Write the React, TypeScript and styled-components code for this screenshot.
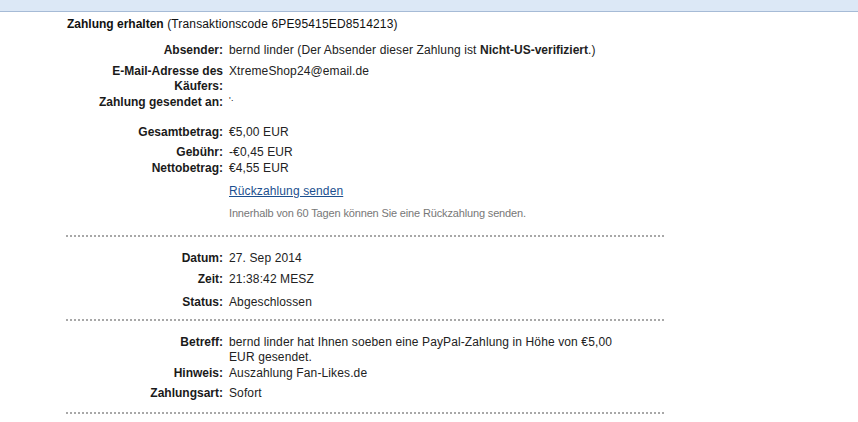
import React from "react";
import styled, { createGlobalStyle } from "styled-components";

const Global = createGlobalStyle`
  html, body { margin: 0; padding: 0; background: #ffffff; }
  body {
    font-family: "Liberation Sans", Arial, sans-serif;
    font-size: 12px;
    color: #222222;
  }
`;

const TopBar = styled.div`
  height: 11px;
  background: #dce8f6;
  border-bottom: 1px solid #a6bbd6;
`;

const Content = styled.div`
  width: 600px;
  margin-left: 66px;
`;

const Title = styled.div`
  margin-top: 5px;
  line-height: 15px;
  padding-left: 1px;
  color: #111111;
  letter-spacing: 0.15px;
  b { font-weight: bold; letter-spacing: 0; }
`;

const Row = styled.div<{ $mt: number }>`
  display: grid;
  grid-template-columns: 157px 398px;
  column-gap: 6px;
  margin-top: ${(p) => p.$mt}px;
  line-height: 15px;
`;

const Label = styled.div`
  font-weight: bold;
  text-align: right;
  color: #1a1a1a;
`;

const Value = styled.div`
  color: #222222;
  letter-spacing: 0.12px;
  b { font-weight: bold; letter-spacing: 0; }
`;

const Link = styled.a`
  color: #1c4f8f;
  text-decoration: underline;
  cursor: pointer;
`;

const Note = styled.div`
  font-size: 11px;
  letter-spacing: -0.15px;
  color: #777777;
`;

const Separator = styled.div<{ $mt: number }>`
  margin-top: ${(p) => p.$mt}px;
  height: 2px;
  background-image: linear-gradient(to right, #a8a8a8 50%, transparent 50%);
  background-size: 4px 2px;
  background-repeat: repeat-x;
`;

const Tiny = styled.span`
  font-size: 9px;
  vertical-align: top;
  line-height: 10px;
`;

export default function App() {
  return (
    <>
      <Global />
      <TopBar />
      <Content>
        <Title>
          <b>Zahlung erhalten</b> (Transaktionscode 6PE95415ED8514213)
        </Title>

        <Row $mt={11}>
          <Label>Absender:</Label>
          <Value>
            bernd linder (Der Absender dieser Zahlung ist <b>Nicht-US-verifiziert</b>.)
          </Value>
        </Row>
        <Row $mt={6}>
          <Label>E-Mail-Adresse des Käufers:</Label>
          <Value>XtremeShop24@email.de</Value>
        </Row>
        <Row $mt={1}>
          <Label>Zahlung gesendet an:</Label>
          <Value>
            <Tiny>'·</Tiny>
          </Value>
        </Row>

        <Row $mt={15}>
          <Label>Gesamtbetrag:</Label>
          <Value>€5,00 EUR</Value>
        </Row>
        <Row $mt={5}>
          <Label>Gebühr:</Label>
          <Value>-€0,45 EUR</Value>
        </Row>
        <Row $mt={1}>
          <Label>Nettobetrag:</Label>
          <Value>€4,55 EUR</Value>
        </Row>
        <Row $mt={8}>
          <Label />
          <Value>
            <Link>Rückzahlung senden</Link>
          </Value>
        </Row>
        <Row $mt={7}>
          <Label />
          <Note>Innerhalb von 60 Tagen können Sie eine Rückzahlung senden.</Note>
        </Row>

        <Separator $mt={14} />

        <Row $mt={14}>
          <Label>Datum:</Label>
          <Value>27. Sep 2014</Value>
        </Row>
        <Row $mt={6}>
          <Label>Zeit:</Label>
          <Value>21:38:42 MESZ</Value>
        </Row>
        <Row $mt={8}>
          <Label>Status:</Label>
          <Value>Abgeschlossen</Value>
        </Row>

        <Separator $mt={9} />

        <Row $mt={14}>
          <Label>Betreff:</Label>
          <Value>
            bernd linder hat Ihnen soeben eine PayPal-Zahlung in Höhe von €5,00 EUR gesendet.
          </Value>
        </Row>
        <Row $mt={1}>
          <Label>Hinweis:</Label>
          <Value>Auszahlung Fan-Likes.de</Value>
        </Row>
        <Row $mt={5}>
          <Label>Zahlungsart:</Label>
          <Value>Sofort</Value>
        </Row>

        <Separator $mt={11} />
      </Content>
    </>
  );
}
